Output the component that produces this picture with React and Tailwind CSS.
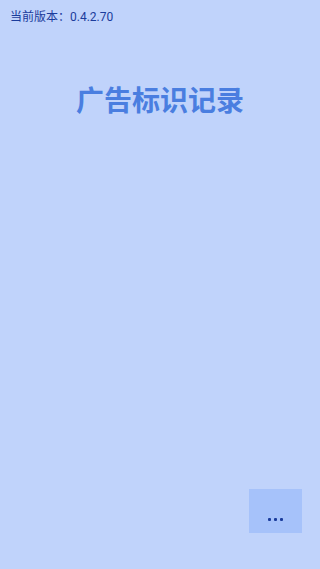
export default function App() {
  return (
    <div
      className="w-[320px] h-[569px] bg-[#c0d3fb] flex flex-col overflow-hidden"
      style={{ fontFamily: 'Roboto, "Noto Sans CJK SC", sans-serif' }}
    >
      <div className="px-[10px] pt-[9px] text-[12px] leading-[16px] text-[#1b3c9c]">
        当前版本：0.4.2.70
      </div>
      <div className="mt-[61px] text-center text-[28px] leading-[32px] font-bold text-[#4a7ee0]">
        广告标识记录
      </div>
      <div className="flex-1" />
      <div className="flex justify-end pr-[18px] pb-[36px]">
        <div className="w-[53px] h-[44px] bg-[#a6c2fa] flex items-center justify-center pt-[16px] gap-[3px]">
          <span className="w-[3px] h-[3px] rounded-[1px] bg-[#1b3c9c]" />
          <span className="w-[3px] h-[3px] rounded-[1px] bg-[#1b3c9c]" />
          <span className="w-[3px] h-[3px] rounded-[1px] bg-[#1b3c9c]" />
        </div>
      </div>
    </div>
  );
}
